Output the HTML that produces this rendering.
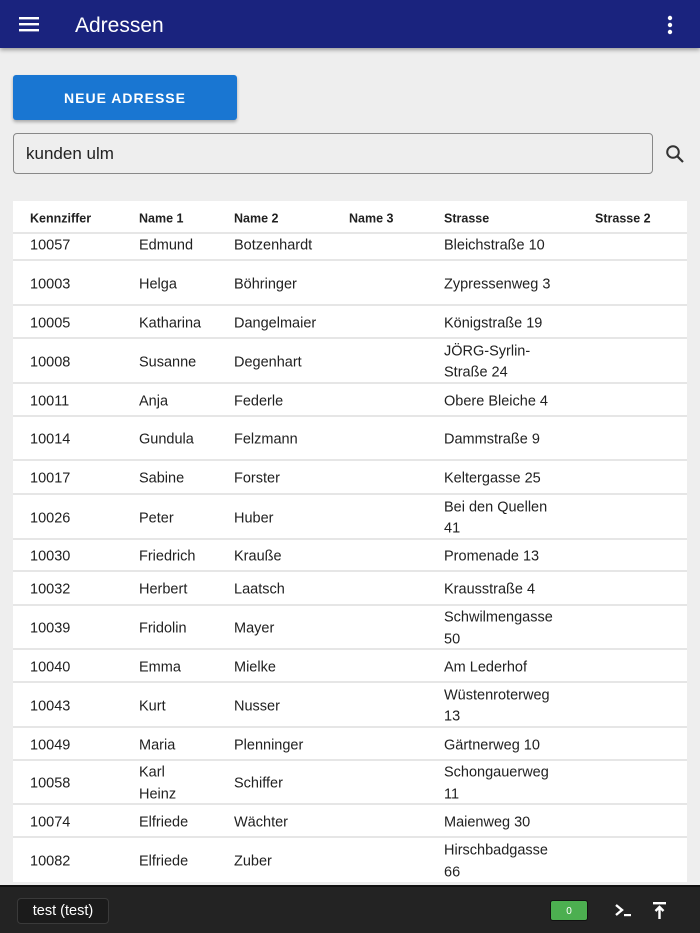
<!DOCTYPE html>
<html><head><meta charset="utf-8"><style>
*{box-sizing:border-box;margin:0;padding:0}
body{width:700px;height:933px;background:#eeeeee;font-family:"Liberation Sans",sans-serif;position:relative;overflow:hidden;color:#212121}
.top{position:absolute;left:0;top:0;width:700px;height:48px;background:#1a237e;box-shadow:0 2px 4px rgba(0,0,0,.35)}
.top .t{position:absolute;left:75px;top:14px;color:#fff;font-size:21px}
.btn{position:absolute;left:13px;top:75px;width:224px;height:45px;background:#1976d2;border-radius:3px;box-shadow:0 2px 3px rgba(0,0,0,.3);color:#fff;font-weight:bold;font-size:14px;letter-spacing:1px;text-align:center;line-height:46px}
.inp{position:absolute;left:13px;top:133px;width:640px;height:41px;border:1px solid #888;border-radius:4px;font-size:17px;padding-left:12px;line-height:40px;background:#eee}
.card{position:absolute;left:13px;top:201px;width:674px;height:681px;background:#fff;overflow:hidden}
.row{position:absolute;left:0;width:674px;border-bottom:2px solid #e6e6e6;font-size:14.5px;line-height:21.5px}
.row span{position:absolute;top:calc(50% + 2px);transform:translateY(-50%)}
.h span{font-weight:bold;font-size:12.5px}
.c0{left:17px}.c1{left:126px}.c2{left:221px}.c3{left:336px}.c4{left:431px}.c5{left:582px}
.bot{position:absolute;left:0;top:885px;width:700px;height:48px;background:#232323;border-top:2px solid #111}
.tag{position:absolute;left:17px;top:11px;height:26px;width:92px;border:1px solid #3a3a3a;background:#1b1b1b;border-radius:4px;color:#fff;font-size:14.5px;text-align:center;line-height:25px}
.badge{position:absolute;left:550px;top:13px;width:38px;height:21px;background:#4caf50;border-radius:3px;color:#fff;font-size:10px;text-align:center;line-height:21px;border:1px solid #111}
</style></head><body>
<div class="top">
<svg style="position:absolute;left:19px;top:16px" width="21" height="16"><rect x="0" y="1" width="20" height="2.4" fill="#fff"/><rect x="0" y="7" width="20" height="2.4" fill="#fff"/><rect x="0" y="13" width="20" height="2.4" fill="#fff"/></svg>
<div class="t">Adressen</div>
<svg style="position:absolute;left:666px;top:15px" width="8" height="20"><circle cx="4" cy="3" r="2.2" fill="#fff"/><circle cx="4" cy="10" r="2.2" fill="#fff"/><circle cx="4" cy="17" r="2.2" fill="#fff"/></svg>
</div>
<div class="btn">NEUE ADRESSE</div>
<div class="inp">kunden ulm</div>
<svg style="position:absolute;left:665px;top:144px" width="20" height="20"><circle cx="8" cy="8" r="5.8" fill="none" stroke="#333" stroke-width="2"/><line x1="12.2" y1="12.2" x2="18" y2="18" stroke="#333" stroke-width="2.2"/></svg>
<div class="card">
<div class="row h" style="top:0;height:33px"><span class="c0">Kennziffer</span><span class="c1">Name 1</span><span class="c2">Name 2</span><span class="c3">Name 3</span><span class="c4">Strasse</span><span class="c5">Strasse 2</span></div>
<div class="row" style="top:33px;height:27px"><span class="c0" style="top:12px">10057</span><span class="c1" style="top:12px">Edmund</span><span class="c2" style="top:12px">Botzenhardt</span><span class="c4" style="top:12px">Bleichstraße 10</span></div>
<div class="row" style="top:60px;height:45px"><span class="c0">10003</span><span class="c1">Helga</span><span class="c2">Böhringer</span><span class="c4">Zypressenweg 3</span></div>
<div class="row" style="top:105px;height:33px"><span class="c0">10005</span><span class="c1">Katharina</span><span class="c2">Dangelmaier</span><span class="c4">Königstraße 19</span></div>
<div class="row" style="top:138px;height:45px"><span class="c0">10008</span><span class="c1">Susanne</span><span class="c2">Degenhart</span><span class="c4">JÖRG-Syrlin-<br>Straße 24</span></div>
<div class="row" style="top:183px;height:33px"><span class="c0">10011</span><span class="c1">Anja</span><span class="c2">Federle</span><span class="c4">Obere Bleiche 4</span></div>
<div class="row" style="top:216px;height:44px"><span class="c0">10014</span><span class="c1">Gundula</span><span class="c2">Felzmann</span><span class="c4">Dammstraße 9</span></div>
<div class="row" style="top:260px;height:34px"><span class="c0">10017</span><span class="c1">Sabine</span><span class="c2">Forster</span><span class="c4">Keltergasse 25</span></div>
<div class="row" style="top:294px;height:45px"><span class="c0">10026</span><span class="c1">Peter</span><span class="c2">Huber</span><span class="c4">Bei den Quellen<br>41</span></div>
<div class="row" style="top:339px;height:32px"><span class="c0">10030</span><span class="c1">Friedrich</span><span class="c2">Krauße</span><span class="c4">Promenade 13</span></div>
<div class="row" style="top:371px;height:34px"><span class="c0">10032</span><span class="c1">Herbert</span><span class="c2">Laatsch</span><span class="c4">Krausstraße 4</span></div>
<div class="row" style="top:405px;height:44px"><span class="c0">10039</span><span class="c1">Fridolin</span><span class="c2">Mayer</span><span class="c4">Schwilmengasse<br>50</span></div>
<div class="row" style="top:449px;height:33px"><span class="c0">10040</span><span class="c1">Emma</span><span class="c2">Mielke</span><span class="c4">Am Lederhof</span></div>
<div class="row" style="top:482px;height:45px"><span class="c0">10043</span><span class="c1">Kurt</span><span class="c2">Nusser</span><span class="c4">Wüstenroterweg<br>13</span></div>
<div class="row" style="top:527px;height:33px"><span class="c0">10049</span><span class="c1">Maria</span><span class="c2">Plenninger</span><span class="c4">Gärtnerweg 10</span></div>
<div class="row" style="top:560px;height:44px"><span class="c0">10058</span><span class="c1">Karl<br>Heinz</span><span class="c2">Schiffer</span><span class="c4">Schongauerweg<br>11</span></div>
<div class="row" style="top:604px;height:33px"><span class="c0">10074</span><span class="c1">Elfriede</span><span class="c2">Wächter</span><span class="c4">Maienweg 30</span></div>
<div class="row" style="top:637px;height:44px;border:none"><span class="c0">10082</span><span class="c1">Elfriede</span><span class="c2">Zuber</span><span class="c4">Hirschbadgasse<br>66</span></div>
</div>
<div class="bot">
<div class="tag">test (test)</div>
<div class="badge">0</div>
<svg style="position:absolute;left:614px;top:16px" width="20" height="16"><path d="M2 2 L8 7 L2 12" fill="none" stroke="#fff" stroke-width="2.4"/><rect x="10" y="11" width="7" height="2.2" fill="#fff"/></svg>
<svg style="position:absolute;left:652px;top:14px" width="16" height="20"><rect x="1" y="1" width="13" height="2.4" fill="#fff"/><path d="M7.5 18 V6 M3.5 10 L7.5 6 L11.5 10" fill="none" stroke="#fff" stroke-width="2.4"/></svg>
</div>
</body></html>
